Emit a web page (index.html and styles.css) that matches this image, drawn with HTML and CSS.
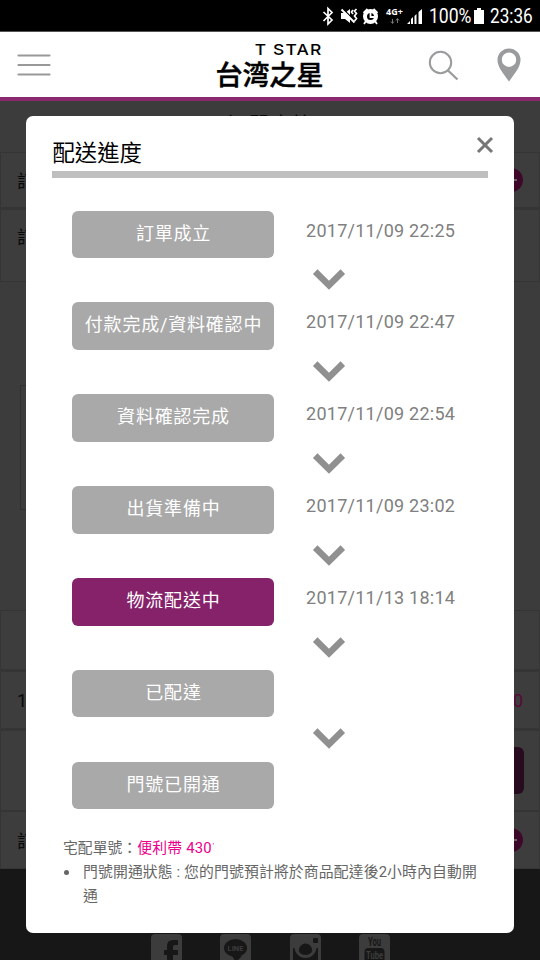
FILE: index.html
```html
<!DOCTYPE html>
<html lang="zh-Hant">
<head>
<meta charset="utf-8">
<title>配送進度</title>
<link rel="stylesheet" href="styles.css">
</head>
<body>
<svg width="0" height="0" class="defs">
  <symbol id="chevron" viewBox="0 0 34 24"><path d="M3.2 3.6 17 17.2 30.8 3.6" fill="none" stroke="#909090" stroke-width="6.4"/></symbol>
</svg>
<div class="screen">
  <div class="status">
    <svg width="100" height="30" viewBox="0 0 100 30">
      <path d="M1.500 11l8.500 8-4 4V7.500l4 4L1.500 20" fill="none" stroke="#fff" stroke-width="1.700"/>
      <path d="M19 12h4l5-4v14l-5-4h-4z" fill="#fff"/>
      <path d="M20.500 7.500l14 14" stroke="#000" stroke-width="1.500"/>
      <path d="M19.500 8.500l13 13" stroke="#fff" stroke-width="2"/>
      <path d="M31 9l-1.500 2 1.500 2M34.500 8l-2 2 2 2.500-2 2.500 2 2.500-2 2.500" fill="none" stroke="#fff" stroke-width="1.700"/>
      <circle cx="48.500" cy="15.500" r="5.500" fill="none" stroke="#fff" stroke-width="4"/>
      <path d="M48.500 11v5h4M41.500 12l4-4M55.500 12l-4-4M44 20l-2 3M53 20l2 3" fill="none" stroke="#fff" stroke-width="1.800"/>
      <path d="M70.500 18v4m-1.500-1.500 1.500 2 1.500-2M75.500 22v-4m-1.500 1.500 1.500-2 1.500 2" fill="none" stroke="#777" stroke-width="1"/>
      <path d="M85 23l3-3v3zM89 23v-5l2-2v7zM92.500 23v-8l2-2v10zM96.500 23V11l3.500-3v15z" fill="#fff"/>
    </svg>
    <span class="network">4G+</span>
    <span class="percent">100%</span>
    <svg class="battery" width="10" height="16" viewBox="0 0 10 16"><path d="M0 2h3V0h4v2h3v14H0z" fill="#fff"/></svg>
    <span class="clock">23:36</span>
  </div>

  <header class="header">
    <svg class="menu" width="34" height="24" viewBox="0 0 34 24"><path d="M1.500 2.500h31M1.500 12h31M1.500 21.500h31" stroke="#999" stroke-width="2.200" stroke-linecap="round"/></svg>
    <div class="logo">
      <span class="logo-en">T STAR</span>
      <span class="logo-zh" lang="ja">台湾之星</span>
    </div>
    <svg class="search" width="32" height="32" viewBox="0 0 32 32"><g fill="none" stroke="#999b9d" stroke-width="2"><circle cx="12.500" cy="12.500" r="10.700"/><path d="M20 20.500l9.500 9" stroke-width="2.300"/></g></svg>
    <svg class="pin" width="24" height="34" viewBox="0 0 24 34"><path fill="#999b9d" fill-rule="evenodd" d="M12 .500A11.500 11.500 0 0 0 .500 12C.500 19 6 25 12 33.500 18 25 23.500 19 23.500 12A11.500 11.500 0 0 0 12 .500zM12 4.500a7.200 7.200 0 1 1 0 14.400 7.200 7.200 0 0 1 0-14.400z"/></svg>
  </header>

  <main class="page">
    <h1 class="page-title">訂單查詢</h1>
    <section class="row row-a"><span>訂</span><i class="toggle"></i></section>
    <section class="row row-b"><span>訂</span></section>
    <div class="panel"></div>
    <section class="row row-c"></section>
    <section class="row row-d"><span>1</span><span class="price">0</span></section>
    <section class="row row-e"><i class="action"></i></section>
    <section class="row row-f"><span>訂</span><i class="toggle"></i></section>
    <footer class="social">
      <svg width="31" height="30" viewBox="0 0 31 30"><rect width="31" height="36" rx="4"/><path class="ink" d="M27 6h-5q-6 0-6 6v4h-3v5h3v10h6V21h5v-5h-5v-3q0-2 2-2h3z"/></svg>
      <svg width="31" height="30" viewBox="0 0 31 30"><rect width="31" height="36" rx="4"/><ellipse class="ink" cx="15.500" cy="14" rx="11.500" ry="9"/><path class="ink" d="M12 22h10l-6 6z"/><text x="15.500" y="17" text-anchor="middle">LINE</text></svg>
      <svg width="31" height="30" viewBox="0 0 31 30"><rect width="31" height="36" rx="4"/><rect class="ink" x="23" y="4" width="5" height="5" rx="1"/><path class="ink" d="M3 14h4a9 9 0 0 0 17 0h4v17H3z"/><circle class="ink" cx="15.500" cy="16" r="6.500"/><path d="M6 13a9.500 9.500 0 0 0 19 0" fill="none" stroke="#3c3c3c" stroke-width="3"/></svg>
      <svg width="31" height="30" viewBox="0 0 31 30"><rect width="31" height="36" rx="4"/><text class="you" x="15.500" y="12" text-anchor="middle" textLength="13" lengthAdjust="spacingAndGlyphs">You</text><rect class="ink" x="5.500" y="14" width="20" height="18" rx="4"/><text class="tube" x="15.500" y="24.500" text-anchor="middle" textLength="17" lengthAdjust="spacingAndGlyphs">Tube</text></svg>
    </footer>
  </main>

  <div class="modal">
    <div class="modal-head">
      <h2>配送進度</h2>
      <svg class="close" width="18" height="18" viewBox="0 0 18 18"><path d="M2 2l14 14M16 2L2 16" stroke="#777" stroke-width="3"/></svg>
    </div>
    <ol class="steps">
      <li><span class="step">訂單成立</span><time>2017/11/09 22:25</time><svg class="arrow"><use href="#chevron"/></svg></li>
      <li><span class="step">付款完成/資料確認中</span><time>2017/11/09 22:47</time><svg class="arrow"><use href="#chevron"/></svg></li>
      <li><span class="step">資料確認完成</span><time>2017/11/09 22:54</time><svg class="arrow"><use href="#chevron"/></svg></li>
      <li><span class="step">出貨準備中</span><time>2017/11/09 23:02</time><svg class="arrow"><use href="#chevron"/></svg></li>
      <li><span class="step current">物流配送中</span><time>2017/11/13 18:14</time><svg class="arrow"><use href="#chevron"/></svg></li>
      <li><span class="step">已配達</span><time></time><svg class="arrow"><use href="#chevron"/></svg></li>
      <li><span class="step">門號已開通</span></li>
    </ol>
    <div class="notes">
      <p>宅配單號：<span class="tracking">便利帶 430<span class="cut">'</span></span></p>
      <ul><li>門號開通狀態 : 您的門號預計將於商品配達後2小時內自動開通</li></ul>
    </div>
  </div>
</div>
</body>
</html>
```
FILE: styles.css
```css
* { box-sizing: border-box; margin: 0; padding: 0; }
body { width: 540px; height: 960px; overflow: hidden; font-family: Roboto, "Noto Sans CJK TC", sans-serif; }
.defs { position: absolute; }
.screen { position: relative; width: 540px; height: 960px; overflow: hidden; display: flex; flex-direction: column; background: #3c3c3c; }

.status { height: 31px; flex: none; background: #000; color: #fff; display: flex; align-items: center; padding-left: 322px; position: relative; font-size: 19.5px; white-space: nowrap; }
.status > svg:first-child { flex: none; }
.network { position: absolute; left: 386px; top: 7px; font: 700 9px/10px "Open Sans", sans-serif; }
.percent { margin-left: 7px; width: 41px; line-height: 31px; padding-top: 2px; transform: scaleX(.9); transform-origin: left; }
.battery { margin-left: 4px; flex: none; }
.clock { margin-left: 6px; line-height: 31px; padding-top: 2px; transform: scaleX(.88); transform-origin: left; }

.header { height: 70px; flex: none; background: #fff; border-bottom: 4px solid #8c286f; border-top: 1px solid #555; display: flex; align-items: flex-start; }
.menu { margin: 21px 0 0 16.5px; }
.logo { width: 110px; margin: 10px 0 0 165px; display: flex; flex-direction: column; color: #000; }
.logo-en { align-self: flex-end; margin-right: 3px; font: 500 15px/15px Inter, sans-serif; letter-spacing: 1px; white-space: nowrap; transform: scaleX(1.16); transform-origin: right; }
.logo-zh { margin-top: 3px; font: 500 27px/28px "Noto Sans CJK JP", sans-serif; -webkit-text-stroke: .4px #000; white-space: nowrap; }
.search { margin: 18px 0 0 102px; }
.pin { margin: 16px 0 0 37px; }

.page { flex: 1; display: flex; flex-direction: column; color: #090909; }
.page-title { height: 51px; padding-top: 9px; text-align: center; font-size: 22px; font-weight: 400; line-height: 32px; }
.row { flex: none; display: flex; align-items: center; justify-content: space-between; border: 1px solid #353535; padding: 0 16px; font-size: 18px; background: #3d3d3d; }
.row-a { height: 57px; border-bottom-width: 2px; }
.row-b { height: 73px; align-items: flex-start; padding-top: 13px; }
.panel { height: 125px; margin: 103px 60px 100px 20px; border: 1px solid #303030; }
.row-c { height: 61px; border-bottom-width: 2px; }
.row-d { height: 59px; border-bottom-width: 2px; }
.row-e { height: 81px; justify-content: flex-end; padding: 0 15px; }
.row-f { height: 58px; }
.price { color: #5a0938; }
.toggle { width: 24px; height: 24px; border-radius: 50%; background: linear-gradient(#666, #666) center / 11px 2px no-repeat #3d0829; margin-left: auto; }
.action { width: 100px; height: 47px; border-radius: 6px; background: #270c20; }
.social { flex: 1; background: #171717; padding: 65px 0 0 151px; display: flex; gap: 38.3px; }
.social svg { flex: none; fill: #3c3c3c; }
.social .ink { fill: #171717; }
.social text { font: 700 7.5px Roboto, sans-serif; }
.social .you { font-size: 12px; fill: #171717; }
.social .tube { font-size: 11px; }

.modal { position: absolute; left: 26px; top: 116px; width: 488.4px; height: 816.5px; border-radius: 7px; background: #fff; padding: 20px 26px; }
.modal-head { width: 436px; height: 42px; margin-left: .4px; border-bottom: 7px solid #bfbfbf; position: relative; }
.modal-head h2 { font-size: 22.4px; font-weight: 400; line-height: 34px; color: #000; }
.close { position: absolute; right: -6px; top: 0; }
.steps { list-style: none; padding: 32.5px 0 0 20px; }
.steps li { height: 91.9px; display: grid; grid-template-columns: 202px 160px; grid-template-rows: 48px 1fr; column-gap: 32px; }
.step { height: 47.5px; border-radius: 6px; background: #a9a9a9; color: #fff; font-size: 18px; letter-spacing: .8px; line-height: 46.5px; padding-left: 1px; text-align: center; white-space: nowrap; }
.step.current { background: #85226a; }
.steps time { font-size: 18px; line-height: 40.5px; letter-spacing: .26px; color: #808080; white-space: nowrap; }
.arrow { grid-column: 2; width: 34px; height: 24px; margin: 9.5px 0 0 5.5px; }
.steps li:last-child { height: 73.7px; }
.notes { padding-left: 11px; font-size: 14.85px; line-height: 24px; color: #666; }
.notes ul { list-style: none; }
.notes li { position: relative; padding-left: 20px; width: 420px; letter-spacing: .12px; word-break: break-all; }
.notes li::before { content: ""; position: absolute; left: 1px; top: 10px; width: 5px; height: 5px; border-radius: 50%; background: #666; }
.tracking { color: #ec008c; letter-spacing: .2px; }
.cut { display: inline-block; margin-left: 1px; font-size: 8px; line-height: 8px; vertical-align: 5px; }
```
